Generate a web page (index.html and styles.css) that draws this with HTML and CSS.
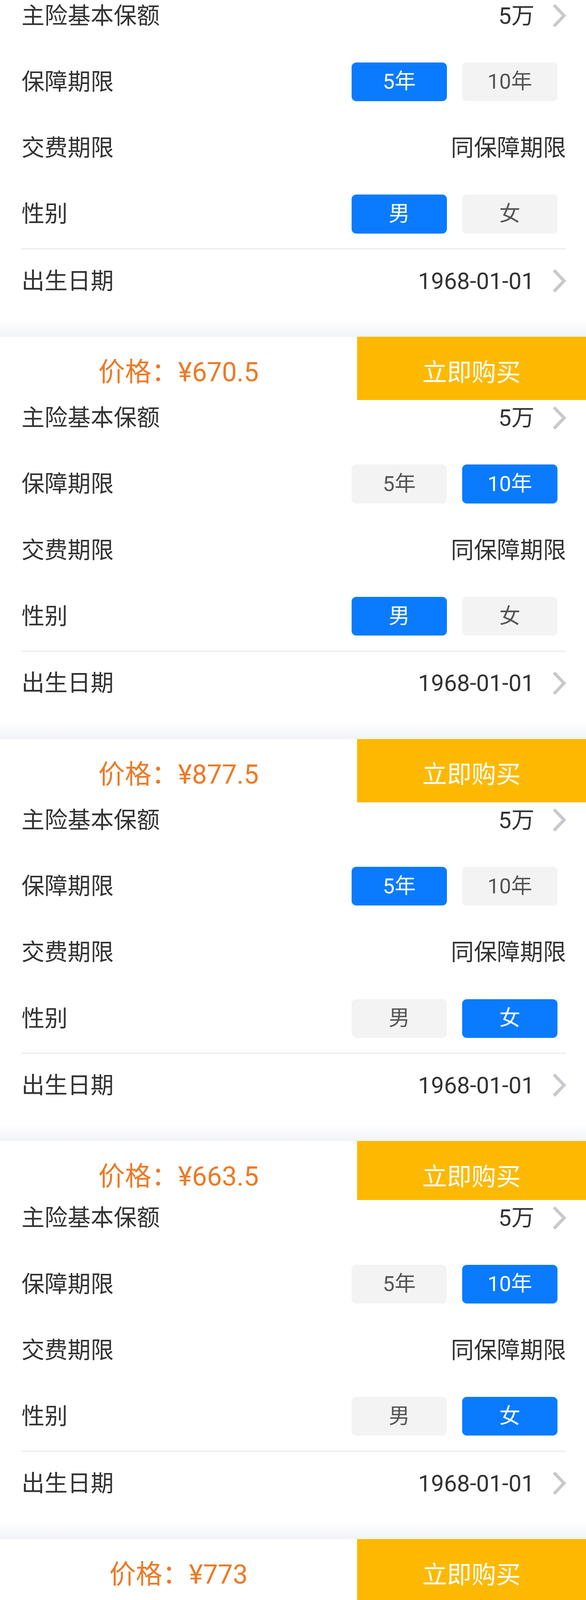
FILE: index.html
```html
<!DOCTYPE html>
<html lang="zh-CN">
<head>
<meta charset="utf-8">
<title>保险试算</title>
<link rel="stylesheet" href="styles.css">
</head>
<body>
<main class="page">

  <section class="plan">
    <div class="row row--cut">
      <span class="row__label">主险基本保额</span>
      <span class="row__value"><span>5万</span><svg class="chev" viewBox="0 0 34 60" width="34" height="60"><polyline points="3,3 29,30 3,57"/></svg></span>
    </div>
    <div class="row">
      <span class="row__label">保障期限</span>
      <div class="seg"><span class="seg__btn seg__btn--on">5年</span><span class="seg__btn">10年</span></div>
    </div>
    <div class="row">
      <span class="row__label">交费期限</span>
      <span class="row__value">同保障期限</span>
    </div>
    <div class="row">
      <span class="row__label">性别</span>
      <div class="seg"><span class="seg__btn seg__btn--on">男</span><span class="seg__btn">女</span></div>
    </div>
    <div class="divider"></div>
    <div class="row row--last">
      <span class="row__label">出生日期</span>
      <span class="row__value"><span>1968-01-01</span><svg class="chev" viewBox="0 0 34 60" width="34" height="60"><polyline points="3,3 29,30 3,57"/></svg></span>
    </div>
    <div class="plan__fade"></div>
  </section>
  <div class="buy-bar">
    <div class="buy-bar__price">价格：¥670.5</div>
    <div class="buy-bar__action">立即购买</div>
  </div>

  <section class="plan">
    <div class="row row--under">
      <span class="row__label">主险基本保额</span>
      <span class="row__value"><span>5万</span><svg class="chev" viewBox="0 0 34 60" width="34" height="60"><polyline points="3,3 29,30 3,57"/></svg></span>
    </div>
    <div class="row">
      <span class="row__label">保障期限</span>
      <div class="seg"><span class="seg__btn">5年</span><span class="seg__btn seg__btn--on">10年</span></div>
    </div>
    <div class="row">
      <span class="row__label">交费期限</span>
      <span class="row__value">同保障期限</span>
    </div>
    <div class="row">
      <span class="row__label">性别</span>
      <div class="seg"><span class="seg__btn seg__btn--on">男</span><span class="seg__btn">女</span></div>
    </div>
    <div class="divider"></div>
    <div class="row row--last">
      <span class="row__label">出生日期</span>
      <span class="row__value"><span>1968-01-01</span><svg class="chev" viewBox="0 0 34 60" width="34" height="60"><polyline points="3,3 29,30 3,57"/></svg></span>
    </div>
    <div class="plan__fade"></div>
  </section>
  <div class="buy-bar">
    <div class="buy-bar__price">价格：¥877.5</div>
    <div class="buy-bar__action">立即购买</div>
  </div>

  <section class="plan">
    <div class="row row--under">
      <span class="row__label">主险基本保额</span>
      <span class="row__value"><span>5万</span><svg class="chev" viewBox="0 0 34 60" width="34" height="60"><polyline points="3,3 29,30 3,57"/></svg></span>
    </div>
    <div class="row">
      <span class="row__label">保障期限</span>
      <div class="seg"><span class="seg__btn seg__btn--on">5年</span><span class="seg__btn">10年</span></div>
    </div>
    <div class="row">
      <span class="row__label">交费期限</span>
      <span class="row__value">同保障期限</span>
    </div>
    <div class="row">
      <span class="row__label">性别</span>
      <div class="seg"><span class="seg__btn">男</span><span class="seg__btn seg__btn--on">女</span></div>
    </div>
    <div class="divider"></div>
    <div class="row row--last">
      <span class="row__label">出生日期</span>
      <span class="row__value"><span>1968-01-01</span><svg class="chev" viewBox="0 0 34 60" width="34" height="60"><polyline points="3,3 29,30 3,57"/></svg></span>
    </div>
    <div class="plan__fade"></div>
  </section>
  <div class="buy-bar buy-bar--clipped">
    <div class="buy-bar__price">价格：¥663.5</div>
    <div class="buy-bar__action">立即购买</div>
  </div>

  <section class="plan">
    <div class="row row--under">
      <span class="row__label">主险基本保额</span>
      <span class="row__value"><span>5万</span><svg class="chev" viewBox="0 0 34 60" width="34" height="60"><polyline points="3,3 29,30 3,57"/></svg></span>
    </div>
    <div class="row">
      <span class="row__label">保障期限</span>
      <div class="seg"><span class="seg__btn">5年</span><span class="seg__btn seg__btn--on">10年</span></div>
    </div>
    <div class="row">
      <span class="row__label">交费期限</span>
      <span class="row__value">同保障期限</span>
    </div>
    <div class="row">
      <span class="row__label">性别</span>
      <div class="seg"><span class="seg__btn">男</span><span class="seg__btn seg__btn--on">女</span></div>
    </div>
    <div class="divider"></div>
    <div class="row row--last">
      <span class="row__label">出生日期</span>
      <span class="row__value"><span>1968-01-01</span><svg class="chev" viewBox="0 0 34 60" width="34" height="60"><polyline points="3,3 29,30 3,57"/></svg></span>
    </div>
    <div class="plan__fade"></div>
  </section>
  <div class="buy-bar buy-bar--end">
    <div class="buy-bar__price">价格：¥773</div>
    <div class="buy-bar__action">立即购买</div>
  </div>

</main>
</body>
</html>
```

FILE: styles.css
```css
/* Vertical metrics are expressed in vh of a 4500px-tall design (1vh = 45px),
   so the whole page always fits the window height. */
* {
  box-sizing: border-box;
}

html, body {
  margin: 0;
  padding: 0;
  background: #ffffff;
  overflow: hidden;
}

body {
  font-family: Roboto, "Noto Sans CJK SC", "Noto Sans", sans-serif;
  color: #333333;
}

.page {
  display: flex;
  flex-direction: column;
  width: 100%;
  height: 100vh;
}

.plan {
  display: flex;
  flex-direction: column;
  flex: none;
  background: #ffffff;
}

.row {
  display: flex;
  align-items: center;
  justify-content: space-between;
  height: 4.1333vh;
  padding: 0 51px 0 55px;
  font-size: 59px;
  line-height: 1;
}

.row--cut {
  height: 3.0444vh;
  padding-bottom: 1.0889vh;
}

.row--under {
  height: 3.1778vh;
  padding-bottom: 0.9556vh;
}

.row--last {
  height: 3.9556vh;
}

.row__label {
  color: #333333;
}

.row__value {
  display: flex;
  align-items: center;
  gap: 47px;
  color: #333333;
}

.chev {
  display: block;
  fill: none;
  stroke: #c8c8cd;
  stroke-width: 8;
  stroke-linecap: butt;
  stroke-linejoin: miter;
}

.seg {
  display: flex;
  gap: 39px;
  margin-right: 22px;
}

.seg__btn {
  display: flex;
  align-items: center;
  justify-content: center;
  width: 244px;
  height: 2.4222vh;
  border-radius: 12px;
  background: #f3f3f3;
  color: #555555;
  font-size: 54px;
}

.seg__btn--on {
  background: #0a7bff;
  color: #ffffff;
}

.divider {
  height: 2px;
  margin: 0.0889vh 51px 0 55px;
  background: #e4e4e4;
}

.plan__fade {
  height: 1.5111vh;
  background: linear-gradient(to bottom, #ffffff 0%, #ffffff 28%, #f2f3f6 100%);
}

.buy-bar {
  display: flex;
  flex: none;
  height: 3.9556vh;
  overflow: hidden;
  background: #ffffff;
}

.buy-bar--clipped {
  height: 3.6889vh;
}

.buy-bar--end {
  flex: 1 1 auto;
  height: auto;
  min-height: 0;
}

.buy-bar__price,
.buy-bar__action {
  display: flex;
  align-items: center;
  justify-content: center;
  height: 3.9556vh;
  padding-top: 0.4889vh;
  line-height: 1;
}

.buy-bar__price {
  flex: 0 0 914px;
  color: #ec7a26;
  font-size: 68px;
}

.buy-bar__action {
  flex: 1 1 auto;
  background: #fdb902;
  color: #ffffff;
  font-size: 63px;
}
```
